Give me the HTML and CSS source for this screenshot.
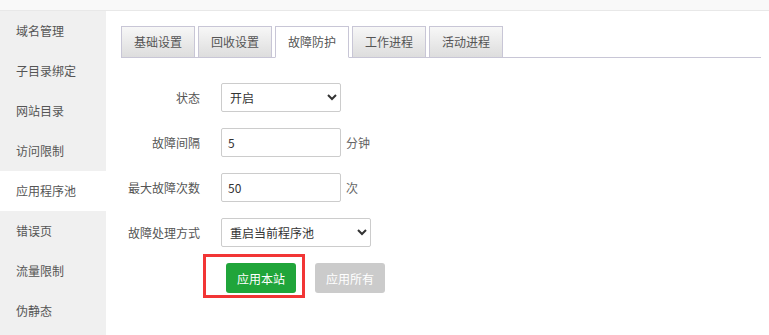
FILE: index.html
```html
<!DOCTYPE html>
<html lang="zh-CN">
<head>
  <meta charset="UTF-8" />
  <meta name="viewport" content="width=device-width, initial-scale=1.0" />
  <title>网站设置 - 应用程序池</title>
  <link rel="stylesheet" href="styles.css">
</head>
<body>
  <div class="topbar"></div>

  <div class="main">
    <ul class="sidebar">
      <li>域名管理</li>
      <li>子目录绑定</li>
      <li>网站目录</li>
      <li>访问限制</li>
      <li class="active">应用程序池</li>
      <li>错误页</li>
      <li>流量限制</li>
      <li>伪静态</li>
    </ul>

    <div class="content">
      <ul class="tabs">
        <li>基础设置</li>
        <li>回收设置</li>
        <li class="active">故障防护</li>
        <li>工作进程</li>
        <li>活动进程</li>
      </ul>

      <form class="form">
        <div class="row">
          <label>状态</label>
          <select class="field">
            <option>开启</option>
            <option>关闭</option>
          </select>
        </div>
        <div class="row">
          <label>故障间隔</label>
          <input class="field" type="text" value="5">
          <span class="unit">分钟</span>
        </div>
        <div class="row">
          <label>最大故障次数</label>
          <input class="field" type="text" value="50">
          <span class="unit">次</span>
        </div>
        <div class="row">
          <label>故障处理方式</label>
          <select class="field wide">
            <option>重启当前程序池</option>
          </select>
        </div>
        <div class="actions">
          <span class="mark">
            <button type="button" class="btn btn-green">应用本站</button>
          </span>
          <button type="button" class="btn btn-gray" disabled>应用所有</button>
        </div>
      </form>
    </div>
  </div>
</body>
</html>
```

FILE: styles.css
```css
:root {
  --text: #555;
  --border: #ccc;
  --tab-border: #c8c6d6;
  --green: #20a53a;
}

* {
  margin: 0;
  padding: 0;
  box-sizing: border-box;
}

body {
  font-family: "Noto Sans CJK SC", "Noto Sans", sans-serif;
  font-size: 12px;
  color: var(--text);
  background: #fff;
}

ul {
  list-style: none;
}

.topbar {
  height: 11px;
  background: #f9f9f9;
  border-bottom: 1px solid #e8e8e8;
}

.main {
  display: flex;
}

.sidebar {
  width: 106px;
  background: #f0f0f0;
  min-height: 324px;
}

.sidebar li {
  height: 40px;
  line-height: 40px;
  padding-left: 16px;
  color: #555;
}

.sidebar li.active {
  background: #fff;
}

.content {
  flex: 1;
  padding: 15px 8px 0 15px;
}

.tabs {
  display: flex;
  gap: 3px;
  border-bottom: 1px solid var(--tab-border);
}

.tabs li {
  width: 74px;
  height: 32px;
  line-height: 30px;
  text-align: center;
  margin-bottom: -1px;
  border: 1px solid var(--tab-border);
  background: linear-gradient(#f7f7f7, #dddddd);
  color: #555;
}

.tabs li.active {
  background: #fff;
  border-bottom-color: #fff;
}

.form {
  padding-top: 25px;
}

.row {
  display: flex;
  align-items: center;
  height: 29px;
  margin-bottom: 16px;
}

.row label {
  width: 79px;
  margin-right: 21px;
  text-align: right;
  color: #555;
}

.field {
  width: 120px;
  height: 29px;
  border: 1px solid var(--border);
  border-radius: 2px;
  padding: 0 6px;
  font-family: inherit;
  font-size: 12px;
  color: #333;
  background: #fff;
  outline: none;
}

select.field {
  padding: 0 4px;
}

.field.wide {
  width: 150px;
}

.unit {
  margin-left: 5px;
  color: #666;
}

.actions {
  display: flex;
  align-items: center;
  padding-left: 105px;
}

.mark {
  position: relative;
  margin-right: 19px;
}

/* red highlight box around the primary button */
.mark::after {
  content: "";
  position: absolute;
  top: -9px;
  left: -23px;
  right: -9px;
  bottom: -5px;
  border: 3px solid #f23535;
}

.btn {
  width: 70px;
  height: 30px;
  border: none;
  border-radius: 3px;
  color: #fff;
  font-family: inherit;
  font-size: 12px;
  display: block;
}

.btn-green {
  background: var(--green);
}

.btn-gray {
  background: #cbcbcb;
}
```
